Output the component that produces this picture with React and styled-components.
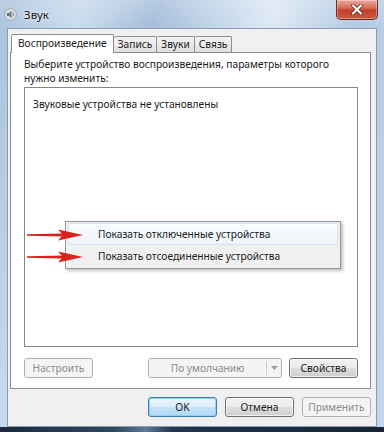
import React from 'react';
import styled, { createGlobalStyle } from 'styled-components';

const Global = createGlobalStyle`
  html, body { margin: 0; padding: 0; }
  body {
    width: 384px; height: 432px; overflow: hidden;
    font-family: "Noto Sans", "Open Sans", sans-serif;
    font-size: 10.2px; color: #1a1a1a;
  }
`;

const Window = styled.div`
  width: 384px; height: 432px; box-sizing: border-box;
  display: flex; flex-direction: column;
  padding: 0 7px;
  background:
    linear-gradient(180deg, rgba(255,255,255,0.2) 0%, rgba(255,255,255,0) 30px),
    linear-gradient(100deg, #a9c1dd 0%, #c9dbee 18%, #a3bcd9 34%, #c2d5ea 48%, #dde8f4 60%, #b2c9e2 78%, #c3d6eb 100%);
`;

const TitleBar = styled.div`
  height: 28px; display: flex; align-items: center;
  margin-left: -3px; margin-right: -1px;
`;

const AppIcon = styled.svg`
  width: 13px; height: 13px; flex: none;
`;

const Title = styled.div`
  margin-left: 7px; font-size: 11.5px; color: #111;
  text-shadow: 0 0 6px rgba(255,255,255,0.9), 0 0 2px rgba(255,255,255,0.9);
`;

const CloseButton = styled.div`
  margin-left: auto; align-self: flex-start;
  width: 42px; height: 20px; box-sizing: border-box;
  border: 1px solid #6e2a21; border-top: none;
  border-radius: 0 0 5px 5px;
  background: linear-gradient(180deg, #e9a99c 0%, #d8705f 40%, #c2402c 55%, #c95a44 100%);
  box-shadow: inset 0 0 0 1px rgba(255,255,255,0.35);
  display: flex; align-items: center; justify-content: center;
`;

const Client = styled.div`
  flex: 1; display: flex; flex-direction: column;
  background: #f0f0f0;
  border: 1px solid #8a9cb2;
  padding: 5px 5px 9px 2px;
  min-height: 0;
`;

const Tabs = styled.div`
  display: flex; align-items: flex-end; height: 18px; padding-left: 1px;
`;

const Tab = styled.div`
  box-sizing: border-box;
  height: ${p => (p.$active ? '19px' : '16px')};
  margin-bottom: ${p => (p.$active ? '-1px' : '0')};
  position: relative; z-index: ${p => (p.$active ? 1 : 0)};
  border: 1px solid #898c95; border-bottom: none;
  border-left-width: ${p => (p.$first ? '1px' : '0')};
  border-radius: 2px 2px 0 0;
  background: ${p => (p.$active ? '#ffffff' : 'linear-gradient(180deg, #f3f3f3 0%, #ebebeb 50%, #dfdfdf 100%)')};
  padding: 0 ${p => (p.$active ? '6px' : '4px')};
  display: flex; align-items: center;
  line-height: 1; white-space: nowrap;
  padding-bottom: ${p => (p.$active ? '2px' : '0')};
`;

const Panel = styled.div`
  flex: 1; min-height: 0;
  background: #ffffff;
  border: 1px solid #898c95;
  padding: 4px 12px 10px 13px;
  display: flex; flex-direction: column;
`;

const Instruction = styled.div`
  line-height: 14px;
  width: 318px;
`;

const ListBox = styled.div`
  flex: 1; margin-top: 2px;
  border: 1px solid #828790;
  position: relative;
  padding: 9px 8px;
`;

const EmptyText = styled.div`
  line-height: 14px;
`;

const ContextMenu = styled.div`
  position: absolute; left: 40px; top: 133px;
  width: 276px; box-sizing: border-box;
  background: #f0f0f0;
  border: 1px solid #979797;
  box-shadow: 2px 2px 3px rgba(0,0,0,0.25);
  padding: 1px 2px;
  display: flex; flex-direction: column;
`;

const MenuItem = styled.div`
  height: 22px; box-sizing: border-box;
  display: flex; align-items: center;
  padding-left: 29px;
  border: 1px solid ${p => (p.$hover ? '#d4e3f3' : 'transparent')};
  border-radius: 2px;
  background: ${p => (p.$hover ? 'linear-gradient(180deg, #fafcfe 0%, #eef4fb 100%)' : 'transparent')};
  white-space: nowrap;
`;

const Arrow = styled.svg`
  position: absolute; left: 2px; top: ${p => p.$top}px;
  width: 56px; height: 12px;
`;

const ButtonRow = styled.div`
  display: flex; align-items: center; margin-top: 11px; gap: 7px;
`;

const Button = styled.div`
  box-sizing: border-box;
  width: ${p => p.$w || 69}px; height: 20px;
  display: flex; align-items: center; justify-content: center;
  border-radius: 3px;
  white-space: nowrap;
  border: 1px solid ${p => (p.$disabled ? '#adb2b5' : p.$default ? '#3c7fb1' : '#707070')};
  color: ${p => (p.$disabled ? '#8b8b8b' : '#1a1a1a')};
  background: ${p =>
    p.$disabled
      ? '#f4f4f4'
      : p.$default
      ? 'linear-gradient(180deg, #ecf6fc 0%, #dcecfa 50%, #c4e2f7 51%, #b3d9f4 100%)'
      : 'linear-gradient(180deg, #f2f2f2 0%, #ebebeb 50%, #dddddd 51%, #cfcfcf 100%)'};
  box-shadow: ${p => (p.$default ? 'inset 0 0 0 1px #98d1ef' : p.$disabled ? 'none' : 'inset 0 0 0 1px rgba(255,255,255,0.7)')};
  margin-right: ${p => (p.$push ? 'auto' : '0')};
`;

const Combo = styled.div`
  box-sizing: border-box; width: 134px; height: 20px;
  display: flex; align-items: stretch;
  border: 1px solid #adb2b5; border-radius: 3px;
  background: #f4f4f4; color: #8b8b8b;
`;

const ComboText = styled.div`
  flex: 1; display: flex; align-items: center; justify-content: center;
  border-right: 1px solid #c9cccf; margin: 2px 0; white-space: nowrap;
`;

const ComboArrow = styled.div`
  width: 14px; display: flex; align-items: center; justify-content: center;
`;

const DialogRow = styled.div`
  display: flex; justify-content: flex-end; gap: 8px; padding-top: 8px;
`;

const BottomEdge = styled.div`
  height: 5px; margin: 0 -7px;
  background: linear-gradient(90deg, #1b2a3c 0%, #31485f 30%, #5d7b95 38%, #22354a 45%, #182435 100%);
`;

function RedArrow({ top }) {
  return (
    <Arrow $top={top} viewBox="0 0 56 12">
      <path d="M0 5.2 L36 4.6 L36 7.4 L0 6.8 Z" fill="#d8231d" />
      <path d="M31 0.5 L56 6 L31 11.5 L36 6 Z" fill="#d8231d" />
    </Arrow>
  );
}

export default function App() {
  return (
    <>
      <Global />
      <Window>
        <TitleBar>
          <AppIcon viewBox="0 0 13 13">
            <circle cx="6.5" cy="6.5" r="6" fill="#d6dbe0" stroke="#9aa3ad" strokeWidth="0.8" />
            <path d="M3 5 H5 L7.5 3 V10 L5 8 H3 Z" fill="#6c7784" />
            <path d="M9 4.8 Q10.3 6.5 9 8.2" stroke="#6c7784" strokeWidth="0.9" fill="none" />
          </AppIcon>
          <Title>Звук</Title>
          <CloseButton>
            <svg width="14" height="11" viewBox="0 0 14 11">
              <path d="M3 1.5 L11 9.5 M11 1.5 L3 9.5" stroke="#5a2019" strokeWidth="3.6" strokeLinecap="round" />
              <path d="M3 1.5 L11 9.5 M11 1.5 L3 9.5" stroke="#ffffff" strokeWidth="2.2" strokeLinecap="round" />
            </svg>
          </CloseButton>
        </TitleBar>
        <Client>
          <Tabs>
            <Tab $active $first>Воспроизведение</Tab>
            <Tab>Запись</Tab>
            <Tab>Звуки</Tab>
            <Tab>Связь</Tab>
          </Tabs>
          <Panel>
            <Instruction>Выберите устройство воспроизведения, параметры которого нужно изменить:</Instruction>
            <ListBox>
              <EmptyText>Звуковые устройства не установлены</EmptyText>
              <ContextMenu>
                <MenuItem $hover>Показать отключенные устройства</MenuItem>
                <MenuItem>Показать отсоединенные устройства</MenuItem>
              </ContextMenu>
              <RedArrow top={141} />
              <RedArrow top={163} />
            </ListBox>
            <ButtonRow>
              <Button $disabled $push>Настроить</Button>
              <Combo>
                <ComboText>По умолчанию</ComboText>
                <ComboArrow>
                  <svg width="7" height="4" viewBox="0 0 7 4"><path d="M0 0 H7 L3.5 4 Z" fill="#9a9a9a" /></svg>
                </ComboArrow>
              </Combo>
              <Button>Свойства</Button>
            </ButtonRow>
          </Panel>
          <DialogRow>
            <Button $default>OK</Button>
            <Button>Отмена</Button>
            <Button $disabled>Применить</Button>
          </DialogRow>
        </Client>
        <BottomEdge />
      </Window>
    </>
  );
}
